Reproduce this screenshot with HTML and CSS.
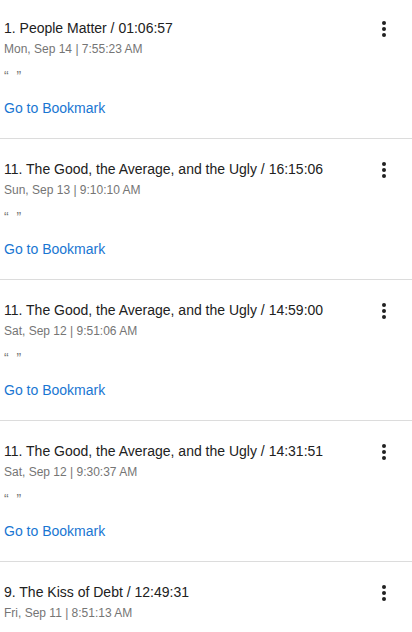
FILE: index.html
```html
<!DOCTYPE html>
<html>
<head>
<meta charset="utf-8">
<link rel="stylesheet" href="styles.css">
</head>
<body>
<div class="list">
  <div class="item">
    <div class="head">
      <div class="info">
        <div class="title">1. People Matter / 01:06:57</div>
        <div class="date">Mon, Sep 14 | 7:55:23 AM</div>
      </div>
      <svg class="more" viewBox="0 0 24 24" width="24" height="24"><circle cx="12" cy="6" r="2"/><circle cx="12" cy="12" r="2"/><circle cx="12" cy="18" r="2"/></svg>
    </div>
    <div class="quote">“ ”</div>
    <a class="link" href="#">Go to Bookmark</a>
  </div>
  <div class="item">
    <div class="head">
      <div class="info">
        <div class="title">11. The Good, the Average, and the Ugly / 16:15:06</div>
        <div class="date">Sun, Sep 13 | 9:10:10 AM</div>
      </div>
      <svg class="more" viewBox="0 0 24 24" width="24" height="24"><circle cx="12" cy="6" r="2"/><circle cx="12" cy="12" r="2"/><circle cx="12" cy="18" r="2"/></svg>
    </div>
    <div class="quote">“ ”</div>
    <a class="link" href="#">Go to Bookmark</a>
  </div>
  <div class="item">
    <div class="head">
      <div class="info">
        <div class="title">11. The Good, the Average, and the Ugly / 14:59:00</div>
        <div class="date">Sat, Sep 12 | 9:51:06 AM</div>
      </div>
      <svg class="more" viewBox="0 0 24 24" width="24" height="24"><circle cx="12" cy="6" r="2"/><circle cx="12" cy="12" r="2"/><circle cx="12" cy="18" r="2"/></svg>
    </div>
    <div class="quote">“ ”</div>
    <a class="link" href="#">Go to Bookmark</a>
  </div>
  <div class="item">
    <div class="head">
      <div class="info">
        <div class="title">11. The Good, the Average, and the Ugly / 14:31:51</div>
        <div class="date">Sat, Sep 12 | 9:30:37 AM</div>
      </div>
      <svg class="more" viewBox="0 0 24 24" width="24" height="24"><circle cx="12" cy="6" r="2"/><circle cx="12" cy="12" r="2"/><circle cx="12" cy="18" r="2"/></svg>
    </div>
    <div class="quote">“ ”</div>
    <a class="link" href="#">Go to Bookmark</a>
  </div>
  <div class="item">
    <div class="head">
      <div class="info">
        <div class="title">9. The Kiss of Debt / 12:49:31</div>
        <div class="date">Fri, Sep 11 | 8:51:13 AM</div>
      </div>
      <svg class="more" viewBox="0 0 24 24" width="24" height="24"><circle cx="12" cy="6" r="2"/><circle cx="12" cy="12" r="2"/><circle cx="12" cy="18" r="2"/></svg>
    </div>
  </div>
</div>
</body>
</html>
```
FILE: styles.css
```css
html, body {
  margin: 0;
  padding: 0;
  background: #fff;
  font-family: "Liberation Sans", Arial, sans-serif;
  overflow: hidden;
}
.list {
  display: flex;
  flex-direction: column;
}
.item {
  display: flex;
  flex-direction: column;
  box-sizing: border-box;
  height: 141px;
  padding: 20px 16px 0 4px;
  border-bottom: 1px solid #dcdcdc;
}
.item:first-child {
  height: 139px;
  padding-top: 18px;
}
.head {
  display: flex;
  align-items: flex-start;
  justify-content: space-between;
}
.title {
  font-size: 14px;
  line-height: 20px;
  color: #212121;
}
.date {
  font-size: 12px;
  line-height: 20px;
  padding-top: 1px;
  color: #757575;
}
.more {
  fill: #212121;
  margin-top: -1px;
}
.quote {
  margin-top: 7px;
  font-size: 14px;
  line-height: 20px;
  word-spacing: 4px;
  color: #757575;
}
.link {
  margin-top: 12px;
  font-size: 14px;
  line-height: 20px;
  color: #1976d2;
  text-decoration: none;
  align-self: flex-start;
}
```
